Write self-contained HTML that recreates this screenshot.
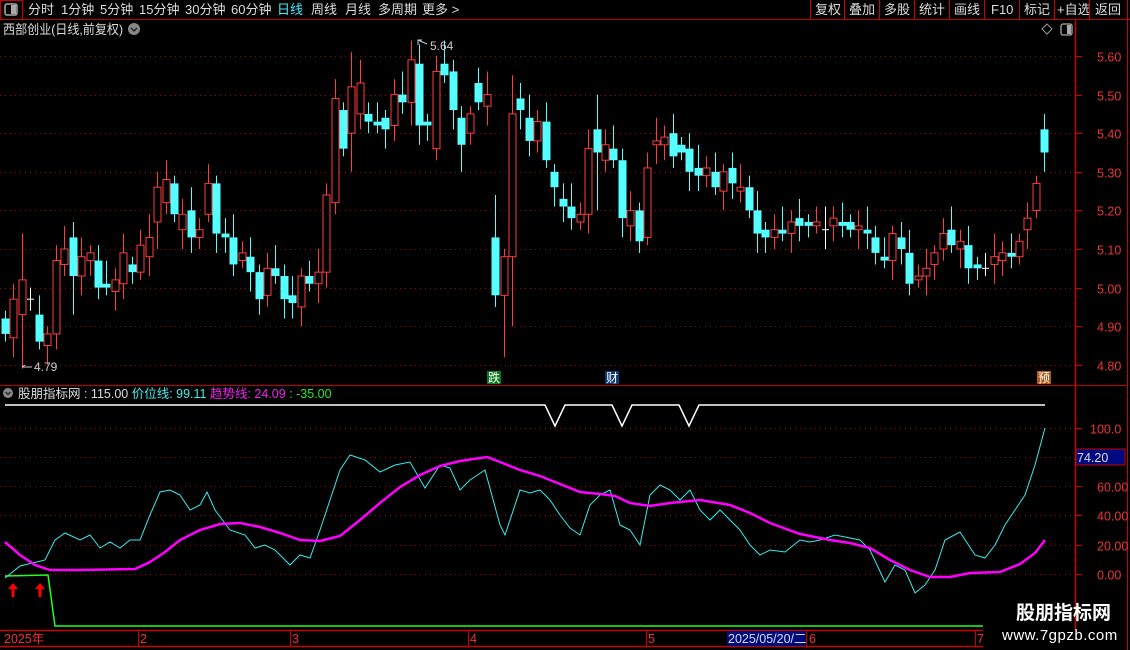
<!DOCTYPE html>
<html><head><meta charset="utf-8"><style>
body{margin:0;background:#000;width:1130px;height:650px;overflow:hidden;font-family:"Liberation Sans","Noto Sans CJK SC",sans-serif;}
svg{display:block}
</style></head><body>
<svg id="s" width="1130" height="650" xmlns="http://www.w3.org/2000/svg" font-family="Liberation Sans, Noto Sans CJK SC, sans-serif">
<rect width="1130" height="650" fill="#000"/>
<line x1="0" y1="19.5" x2="1130" y2="19.5" stroke="#b00" />
<rect x="0.5" y="0.5" width="22" height="19" fill="none" stroke="#c00"/>
<rect x="5" y="4" width="12" height="11" rx="2" fill="none" stroke="#aaa" stroke-width="1.5"/><rect x="11" y="5" width="5" height="9" fill="#aaa"/>
<g font-size="13" fill="#ddd">
<text x="28" y="14">分时</text><text x="61" y="14">1分钟</text><text x="100" y="14">5分钟</text><text x="139" y="14">15分钟</text><text x="185" y="14">30分钟</text><text x="231" y="14">60分钟</text>
<text x="277" y="14" fill="#4ef">日线</text><text x="311" y="14">周线</text><text x="345" y="14">月线</text><text x="378" y="14">多周期</text><text x="422" y="14">更多 &gt;</text>
<text x="815" y="14">复权</text><text x="849" y="14">叠加</text><text x="884" y="14">多股</text><text x="919" y="14">统计</text><text x="954" y="14">画线</text><text x="991" y="14">F10</text><text x="1024" y="14">标记</text><text x="1057" y="14">+自选</text><text x="1095" y="14">返回</text>
</g>
<g stroke="#c00"><line x1="810.5" y1="0" x2="810.5" y2="19"/><line x1="844.5" y1="0" x2="844.5" y2="19"/><line x1="879.5" y1="0" x2="879.5" y2="19"/><line x1="914.5" y1="0" x2="914.5" y2="19"/><line x1="949.5" y1="0" x2="949.5" y2="19"/><line x1="984.5" y1="0" x2="984.5" y2="19"/><line x1="1019.5" y1="0" x2="1019.5" y2="19"/><line x1="1054.5" y1="0" x2="1054.5" y2="19"/><line x1="1089.5" y1="0" x2="1089.5" y2="19"/><line x1="1127.5" y1="0" x2="1127.5" y2="650"/></g>
<text x="3" y="34" font-size="13" fill="#ddd" textLength="120" lengthAdjust="spacingAndGlyphs">西部创业(日线,前复权)</text>
<circle cx="134" cy="29" r="6" fill="#888"/><path d="M131 28 l3 3 l3 -3" stroke="#222" fill="none" stroke-width="1.5"/>
<path d="M1047 24 l5 5 l-5 5 l-5 -5z" fill="none" stroke="#999"/>
<rect x="1061" y="24" width="11" height="11" rx="2" fill="none" stroke="#aaa" stroke-width="1.3"/><rect x="1067" y="25" width="4" height="9" fill="#aaa"/>
<line x1="1075.5" y1="20" x2="1075.5" y2="630" stroke="#c00" stroke-width="1.5"/>
<line x1="0" y1="385.5" x2="1127" y2="385.5" stroke="#b00"/>
<g id="grid"></g>
<g id="cand"></g>
<text x="430" y="50" font-size="12" fill="#ccc">5.64</text><path d="M418 45 v-5 h4 M418 40 l9 4" stroke="#ccc" fill="none"/>
<text x="34" y="371" font-size="12" fill="#ccc">4.79</text><path d="M22 367 h10 M22 367 l3 -2" stroke="#ccc" fill="none"/>
<rect x="487" y="371" width="14" height="13" fill="#0a7a20"/><text x="488" y="382" font-size="12" fill="#fff">跌</text>
<rect x="605" y="371" width="14" height="13" fill="#0d3a6e"/><text x="606" y="382" font-size="12" fill="#fff">财</text>
<rect x="1037" y="371" width="14" height="13" fill="#b05a1a"/><text x="1038" y="382" font-size="12" fill="#fff">预</text>
<circle cx="8" cy="393" r="5" fill="#888"/><path d="M5.5 392 l2.5 2.5 l2.5 -2.5" stroke="#222" fill="none" stroke-width="1.3"/>
<text x="18" y="398" font-size="12.5"><tspan fill="#ddd">股朋指标网 : 115.00 </tspan><tspan fill="#4ee">价位线: 99.11 </tspan><tspan fill="#e2e">趋势线: 24.09 </tspan><tspan fill="#2e2"> : -35.00</tspan></text>
<g id="ind"></g>
<rect x="1076" y="449" width="49" height="16" fill="#000a80" stroke="#c00"/><text x="1077" y="462" font-size="12.5" fill="#ddd">74.20</text>
<line x1="0" y1="630.5" x2="983" y2="630.5" stroke="#c00" stroke-width="1.5"/>
<line x1="0" y1="646.5" x2="983" y2="646.5" stroke="#c00" stroke-width="1.5"/>
<g stroke="#c00"><line x1="138.5" y1="630" x2="138.5" y2="646"/><line x1="290.5" y1="630" x2="290.5" y2="646"/><line x1="468.5" y1="630" x2="468.5" y2="646"/><line x1="646.5" y1="630" x2="646.5" y2="646"/><line x1="806.5" y1="630" x2="806.5" y2="646"/><line x1="975.5" y1="630" x2="975.5" y2="646"/></g>
<g font-size="12.5" fill="#e33"><text x="4" y="643">2025年</text><text x="140" y="643">2</text><text x="292" y="643">3</text><text x="470" y="643">4</text><text x="648" y="643">5</text><text x="809" y="643">6</text><text x="977" y="643">7</text></g>
<rect x="727" y="631" width="78" height="15" fill="#000a80"/><text x="728" y="643" font-size="12.5" fill="#ddd">2025/05/20/二</text>
<text x="1016" y="619" font-size="19" font-weight="bold" fill="#fff">股朋指标网</text>
<text x="1002" y="640" font-size="15" fill="#fff" letter-spacing="0.5">www.7gpzb.com</text>
</svg>
<script>
var NS="http://www.w3.org/2000/svg";
function el(p,t,a){var e=document.createElementNS(NS,t);for(var k in a)e.setAttribute(k,a[k]);p.appendChild(e);return e;}
var py=function(p){return 56+(5.60-p)*386;};
var g=document.getElementById('grid');
[5.6,5.5,5.4,5.3,5.2,5.1,5.0,4.9,4.8].forEach(function(p){var y=Math.round(py(p))+.5;
el(g,'line',{x1:0,y1:y,x2:1075,y2:y,stroke:'#a00','stroke-dasharray':'1 4'});
el(g,'line',{x1:1075,y1:y,x2:1082,y2:y,stroke:'#c00'});
var t=el(g,'text',{x:1097,y:y+5,'font-size':12.5,fill:'#e33'});t.textContent=p.toFixed(2);});
var D=[[4.92,4.88],[4.87,4.97],[4.93,5.02,5.14,4.79],[4.97,4.97],[4.93,4.86],[4.85,4.88],[4.88,5.07],[5.06,5.10],[5.13,5.03,5.17,4.93],[5.03,5.08],[5.07,5.09],[5.07,5.00],[5.01,5.00],[4.99,5.02],[5.01,5.09],[5.06,5.04],[5.04,5.11],[5.08,5.13],[5.17,5.26,5.30,5.1],[5.22,5.28],[5.27,5.19],[5.15,5.19],[5.20,5.13],[5.13,5.15],[5.19,5.27],[5.27,5.14],[5.14,5.13],[5.13,5.06],[5.07,5.09],[5.08,5.04],[5.04,4.97],[4.98,5.05],[5.05,5.03],[5.03,4.97],[4.98,4.96],[4.95,5.03,5.05,4.9],[5.03,5.01],[5.01,5.04],[5.04,5.24],[5.22,5.49],[5.46,5.36],[5.40,5.52,5.61,5.3],[5.45,5.53],[5.45,5.43],[5.43,5.42],[5.44,5.41],[5.42,5.50],[5.50,5.48],[5.48,5.59,5.64,5.42],[5.58,5.42],[5.43,5.42],[5.36,5.56],[5.58,5.55],[5.56,5.46],[5.44,5.37,5.47,5.30],[5.40,5.45],[5.53,5.48],[5.47,5.50],[5.13,4.98,5.24,4.95],[4.98,5.08,5.1,4.82],[5.08,5.45,5.55,4.9],[5.49,5.46],[5.44,5.38],[5.38,5.43],[5.43,5.33],[5.30,5.26],[5.23,5.21],[5.21,5.18],[5.17,5.19],[5.19,5.36],[5.41,5.35,5.50,5.2],[5.33,5.37],[5.36,5.33],[5.33,5.18],[5.16,5.20],[5.20,5.12],[5.13,5.31],[5.37,5.38],[5.37,5.39],[5.40,5.34],[5.37,5.35],[5.36,5.30],[5.31,5.29],[5.29,5.31],[5.30,5.26],[5.25,5.30],[5.31,5.27],[5.25,5.26],[5.26,5.20],[5.20,5.14],[5.15,5.13],[5.13,5.15],[5.15,5.14],[5.14,5.17],[5.18,5.16],[5.17,5.16],[5.16,5.17],[5.15,5.15],[5.16,5.18],[5.17,5.16],[5.17,5.15],[5.15,5.16],[5.15,5.14],[5.13,5.09],[5.08,5.07],[5.07,5.14],[5.13,5.10],[5.09,5.01],[5.02,5.03],[5.03,5.05],[5.06,5.09],[5.10,5.14],[5.15,5.11],[5.10,5.12],[5.11,5.05],[5.06,5.05],[5.05,5.05],[5.06,5.08],[5.07,5.09],[5.09,5.08],[5.08,5.12],[5.15,5.18],[5.20,5.27,5.29,5.18],[5.41,5.35,5.45,5.30]];
var c=document.getElementById('cand');
D.forEach(function(d,i){var x=Math.round(5+i*8.45);var o=d[0],cl=d[1];
var h=d[2]||Math.max(o,cl)+0.02+((i*7)%5)*0.01,l=d[3]||Math.min(o,cl)-0.02-((i*3)%4)*0.01;
var col=cl>o?'#ff3b3b':(cl<o?'#55ffff':'#fff');
el(c,'line',{x1:x+.5,y1:py(h),x2:x+.5,y2:py(l),stroke:col});
var t=py(Math.max(o,cl)),b=py(Math.min(o,cl));
if(cl>o)el(c,'rect',{x:x-3,y:t,width:7,height:Math.max(1,b-t),fill:'#000',stroke:col});
else if(cl<o)el(c,'rect',{x:x-3.5,y:t,width:8,height:Math.max(1,b-t),fill:col});
else el(c,'line',{x1:x-3,y1:t,x2:x+4,y2:t,stroke:col});});
var I=document.getElementById('ind');
var vy=function(v){return 574-v*1.465;};
[100,80,60,40,20,0].forEach(function(v){var y=Math.round(vy(v))+.5;
el(I,'line',{x1:0,y1:y,x2:1075,y2:y,stroke:'#a00','stroke-dasharray':'1 4'});
el(I,'line',{x1:1075,y1:y,x2:1082,y2:y,stroke:'#c00'});
if(v!=80){var t=el(I,'text',{x:v==100?1090:1097,y:y+5,'font-size':12.5,fill:'#e33'});t.textContent=v==100?'100.0':v.toFixed(2);}});
el(I,'polyline',{points:'5,405 545,405 555,426 565,405 612,405 622,426 632,405 679,405 689,426 699,405 1045,405',fill:'none',stroke:'#fff','stroke-width':1.5});
el(I,'polyline',{points:'5,576 48,575 55,626 983,626',fill:'none',stroke:'#2f2','stroke-width':1.5});
el(I,'polyline',{points:'5,578 20,566 45,560 55,540 65,533 80,540 90,535 100,548 110,542 120,548 130,540 140,540 150,515 160,492 170,490 180,495 190,510 200,505 207,492 215,510 230,530 245,535 255,548 265,545 275,550 290,565 300,555 310,558 320,530 330,500 340,470 350,455 365,460 380,472 395,465 410,462 425,488 440,465 450,468 460,490 470,480 485,470 500,525 505,535 520,490 530,493 540,490 550,500 560,515 570,528 580,535 590,505 600,495 610,490 620,525 630,530 640,545 650,495 660,485 670,490 680,500 690,490 700,510 710,520 720,510 730,520 740,530 750,545 760,555 770,550 785,552 800,540 810,542 820,540 835,535 845,537 860,540 870,550 885,582 895,565 905,570 915,593 925,585 935,570 945,540 960,532 975,555 985,558 995,545 1005,525 1015,510 1025,495 1035,465 1045,428',fill:'none',stroke:'#3ee'});
el(I,'polyline',{points:'5,542 20,555 35,565 50,570 80,570 135,569 150,562 165,552 180,540 200,530 220,524 240,523 260,527 280,533 300,540 320,541 340,536 360,520 380,503 400,487 420,475 440,466 460,461 487,457 500,462 520,470 540,476 560,484 580,492 600,494 615,496 630,503 650,506 670,503 700,500 730,505 750,513 770,523 800,534 830,540 850,543 870,548 890,560 910,570 930,577 950,577 970,573 1000,572 1020,564 1035,553 1045,540',fill:'none',stroke:'#f0f','stroke-width':2.5});
[13,40].forEach(function(x){el(I,'path',{d:'M'+x+' 583 l-5 6 h3.5 v8 h3 v-8 h3.5z',fill:'#f00'});});
</script>
</body></html>
